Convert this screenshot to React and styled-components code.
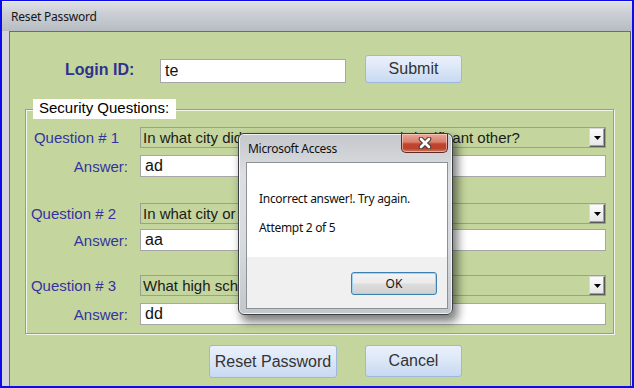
import React from 'react';
import styled, { createGlobalStyle } from 'styled-components';

const Global = createGlobalStyle`
  html, body { margin: 0; padding: 0; background: #ffffff; }
  body { font-family: "Liberation Sans", Arial, sans-serif; }
  * { box-sizing: border-box; }
`;

const ARIAL = `"Liberation Sans", Arial, sans-serif`;
const SEGOE = `"Noto Sans", "Open Sans", sans-serif`;

const Screen = styled.div`
  position: relative;
  width: 634px;
  height: 388px;
  border-style: solid;
  border-color: #0c0ce8;
  border-width: 1px 2px 2px 2px;
  display: flex;
  flex-direction: column;
  background: #cfd3da;
  overflow: hidden;
`;

const TitleBar = styled.div`
  height: 30px;
  flex: none;
  display: flex;
  align-items: center;
  padding-left: 9px;
  font: 12px ${SEGOE};
  letter-spacing: -0.2px;
  color: #151515;
  border-top: 1px solid #eceef1;
  background: linear-gradient(180deg, #dcdfe3 0%, #c9cdd3 45%, #b7bcc3 100%);
`;

const Content = styled.div`
  flex: 1;
  display: flex;
  padding: 0 1px 0 7px;
  background: #d3d7dd;
`;

const Panel = styled.div`
  flex: 1;
  display: flex;
  flex-direction: column;
  background: #c4d69e;
  border-top: 1px solid #6b6e6a;
  border-left: 1px solid #6b6e6a;
  border-right: 1px solid #5a5c5a;
`;

const LoginRow = styled.div`
  display: flex;
  align-items: flex-end;
  margin-top: 23px;
  padding-left: 55px;
`;

const LoginLabel = styled.label`
  width: 95px;
  font: bold 16px ${ARIAL};
  color: #30318f;
  line-height: 24px;
  padding-bottom: 1px;
`;

const TextBox = styled.div`
  width: ${(p) => p.$width || '466px'};
  height: ${(p) => p.$height || '22px'};
  background: #ffffff;
  border: 1px solid #a6a6a6;
  display: flex;
  align-items: center;
  padding-left: 4px;
  font: 16px ${ARIAL};
  color: #111;
`;

const BlueButton = styled.button`
  width: ${(p) => p.$width}px;
  height: ${(p) => p.$height}px;
  margin-left: ${(p) => p.$gap || 0}px;
  border: 1px solid #9db8dc;
  border-radius: 3px;
  background: linear-gradient(180deg, #ebf1fb 0%, #dbe6f7 50%, #c7d9f2 100%);
  font: 16px ${ARIAL};
  color: #333;
  padding: 0;
`;

const Group = styled.fieldset`
  margin: 16px 16px 0 15px;
  padding: 0 0 8px 0;
  border: 1px solid #999c94;
  box-shadow: 1px 1px 0 #f4f6ee, inset 1px 1px 0 #f4f6ee;
`;

const Legend = styled.legend`
  margin-left: 7px;
  padding: 0 7px 0 6px;
  height: 20px;
  line-height: 20px;
  background: #ffffff;
  font: 15px ${ARIAL};
  color: #000;
`;

const FieldRow = styled.div`
  display: grid;
  grid-template-columns: 114px 466px;
  align-items: center;
  margin-top: ${(p) => p.$top}px;
`;

const FieldLabel = styled.span`
  text-align: right;
  padding-right: ${(p) => p.$pad}px;
  font: 15px ${ARIAL};
  color: #3434a0;
`;

const Combo = styled.div`
  height: 21px;
  border: 1px solid #9c9f98;
  display: flex;
  align-items: center;
  overflow: hidden;
`;

const ComboText = styled.span`
  flex: 1;
  padding-left: 2px;
  white-space: nowrap;
  overflow: hidden;
  font: 15px ${ARIAL};
  color: #1b1b1b;
`;

const DropButton = styled.span`
  flex: none;
  width: 16px;
  height: 19px;
  display: flex;
  align-items: center;
  justify-content: center;
  background: linear-gradient(180deg, #fbfbfb, #e6e6e6);
  border: 1px solid #585858;
  border-top-color: #d8d8d8;
  border-left-color: #d8d8d8;
  box-shadow: inset -1px -1px 0 #a0a0a0;
`;

const ButtonRow = styled.div`
  display: flex;
  align-items: flex-start;
  margin-top: 11px;
  padding-left: 199px;
`;

const Dialog = styled.div`
  position: absolute;
  left: 236px;
  top: 132px;
  width: 215px;
  height: 182px;
  display: flex;
  flex-direction: column;
  border: 1px solid #3b3e43;
  border-radius: 6px;
  background: linear-gradient(180deg, #c4c7cb 0%, #dcdee1 22%, #d8dbde 60%, #c3c6ca 100%);
  box-shadow: inset 0 0 0 1px rgba(255, 255, 255, 0.75), 4px 6px 10px 1px rgba(0, 0, 0, 0.5);
`;

const DialogTitle = styled.div`
  height: 28px;
  flex: none;
  display: flex;
  align-items: flex-start;
  justify-content: space-between;
  padding: 0 4px 0 9px;
`;

const DialogTitleText = styled.span`
  font: 12px ${SEGOE};
  letter-spacing: -0.3px;
  color: #111;
  margin-top: 6px;
`;

const CloseButton = styled.span`
  width: 47px;
  height: 19px;
  display: flex;
  align-items: center;
  justify-content: center;
  border: 1px solid #5e2a22;
  border-top: none;
  border-radius: 0 0 5px 5px;
  background: linear-gradient(180deg, #e9a99a 0%, #d9806c 45%, #c3442e 55%, #b8452f 80%, #d47a5a 100%);
  box-shadow: inset 0 0 0 1px rgba(255, 220, 210, 0.55);
`;

const DialogBody = styled.div`
  flex: 1;
  display: flex;
  flex-direction: column;
  margin: 0 4px 5px 7px;
  border: 1px solid #8c9198;
  background: #ffffff;
`;

const Message = styled.div`
  flex: 1;
  padding: 28px 12px 0 12px;
  display: flex;
  flex-direction: column;
  gap: 13px;
  font: 12px ${SEGOE};
  letter-spacing: -0.3px;
  line-height: 16px;
  color: #111;
`;

const DialogFooter = styled.div`
  height: 51px;
  flex: none;
  display: flex;
  justify-content: flex-end;
  align-items: flex-start;
  padding: 15px 10px 0 0;
  background: #f0f0f0;
`;

const OkButton = styled.button`
  width: 86px;
  height: 23px;
  padding: 0;
  border: 1px solid #3c7fb1;
  border-radius: 3px;
  background: linear-gradient(180deg, #f3f3f3 0%, #ebebeb 48%, #dddddd 52%, #d0d0d0 100%);
  box-shadow: inset 0 0 0 1px #9fd5f3;
  font: 12px ${SEGOE};
  color: #111;
`;

const questions = [
  { n: 1, text: 'In what city did you meet your spouse / significant other?', answer: 'ad', top: 8, inner: 7, pad: 21 },
  { n: 2, text: 'In what city or town was your first job?', answer: 'aa', top: 26, inner: 5, pad: 24 },
  { n: 3, text: 'What high school did you attend?', answer: 'dd', top: 24, inner: 7, pad: 24 },
];

function Triangle() {
  return (
    <svg width="7" height="4" viewBox="0 0 7 4">
      <polygon points="0,0 7,0 3.5,4" fill="#000" />
    </svg>
  );
}

function CloseX() {
  return (
    <svg width="14" height="12" viewBox="0 0 14 12">
      <path d="M3 2 L11 10 M11 2 L3 10" stroke="#4a3b38" strokeWidth="4.6" strokeLinecap="round" />
      <path d="M3 2 L11 10 M11 2 L3 10" stroke="#ffffff" strokeWidth="2.6" strokeLinecap="round" />
    </svg>
  );
}

export default function App() {
  return (
    <>
      <Global />
      <Screen>
        <TitleBar>Reset Password</TitleBar>
        <Content>
          <Panel>
            <LoginRow>
              <LoginLabel>Login ID:</LoginLabel>
              <TextBox $width="186px" $height="24px">te</TextBox>
              <BlueButton $width={97} $height={28} $gap={19}>Submit</BlueButton>
            </LoginRow>
            <Group>
              <Legend>Security Questions:</Legend>
              {questions.map((q) => (
                <React.Fragment key={q.n}>
                  <FieldRow $top={q.top}>
                    <FieldLabel $pad={q.pad}>Question # {q.n}</FieldLabel>
                    <Combo>
                      <ComboText>{q.text}</ComboText>
                      <DropButton><Triangle /></DropButton>
                    </Combo>
                  </FieldRow>
                  <FieldRow $top={q.inner}>
                    <FieldLabel $pad={12}>Answer:</FieldLabel>
                    <TextBox>{q.answer}</TextBox>
                  </FieldRow>
                </React.Fragment>
              ))}
            </Group>
            <ButtonRow>
              <BlueButton $width={128} $height={33}>Reset Password</BlueButton>
              <BlueButton $width={97} $height={32} $gap={28}>Cancel</BlueButton>
            </ButtonRow>
          </Panel>
        </Content>
        <Dialog>
          <DialogTitle>
            <DialogTitleText>Microsoft Access</DialogTitleText>
            <CloseButton><CloseX /></CloseButton>
          </DialogTitle>
          <DialogBody>
            <Message>
              <span>Incorrect answer!. Try again.</span>
              <span>Attempt 2 of 5</span>
            </Message>
            <DialogFooter>
              <OkButton>OK</OkButton>
            </DialogFooter>
          </DialogBody>
        </Dialog>
      </Screen>
    </>
  );
}
